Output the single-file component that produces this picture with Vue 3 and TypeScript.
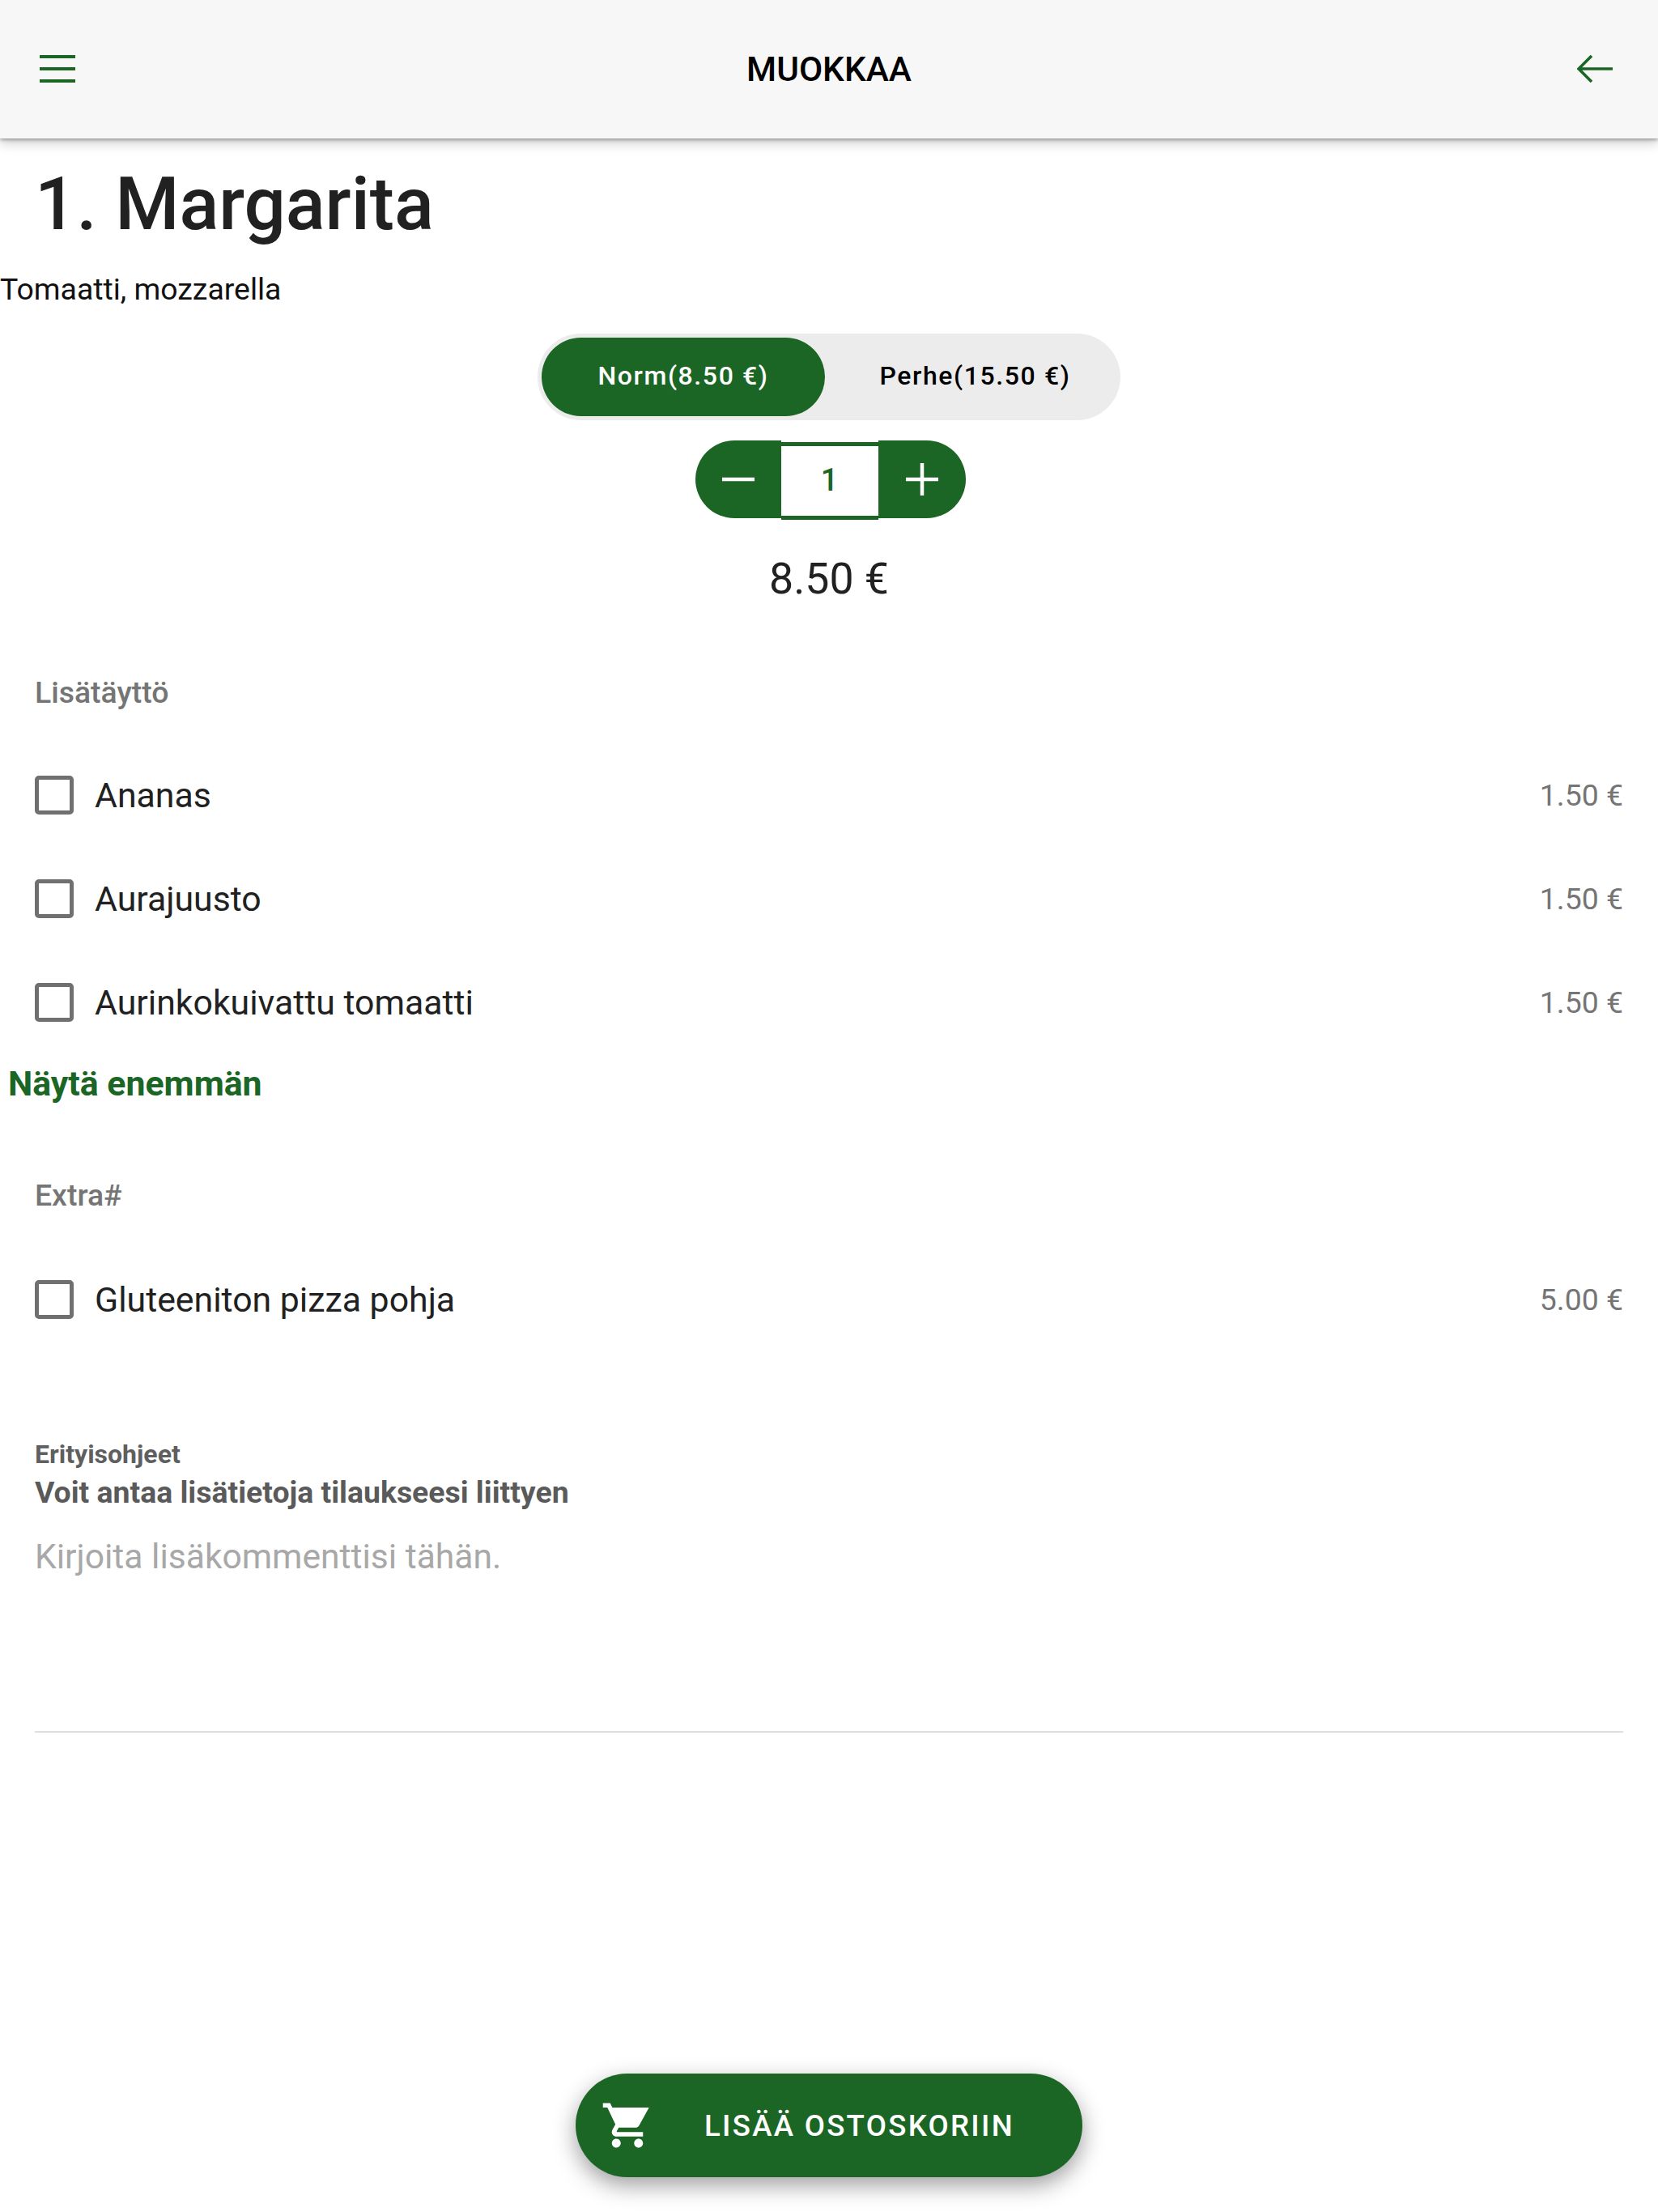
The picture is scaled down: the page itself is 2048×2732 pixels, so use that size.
<script setup lang="ts">
interface Topping { name: string; price: string }
const toppings: Topping[] = [
  { name: 'Ananas', price: '1.50 €' },
  { name: 'Aurajuusto', price: '1.50 €' },
  { name: 'Aurinkokuivattu tomaatti', price: '1.50 €' },
]
const extras: Topping[] = [{ name: 'Gluteeniton pizza pohja', price: '5.00 €' }]
</script>

<template>
  <div class="page">
    <header class="bar">
      <svg class="bar-icon" viewBox="0 0 44 34" fill="none" stroke="#1b6625" stroke-width="4">
        <path d="M0 2h44M0 17h44M0 32h44" />
      </svg>
      <div class="bar-title">MUOKKAA</div>
      <svg class="bar-icon" viewBox="0 0 44 34" fill="none" stroke="#1b6625" stroke-width="3.6">
        <path d="M44 17H2M18 1 2 17l16 16" />
      </svg>
    </header>

    <h1 class="name">1. Margarita</h1>
    <p class="desc">Tomaatti, mozzarella</p>

    <div class="segment">
      <div class="seg on">Norm(8.50 €)</div>
      <div class="seg off">Perhe(15.50 €)</div>
    </div>

    <div class="stepper">
      <div class="step left">
        <svg viewBox="0 0 40 40" width="40" height="40" fill="none" stroke="#fff" stroke-width="4.5" stroke-linecap="round"><path d="M0 20h40" /></svg>
      </div>
      <div class="qty">1</div>
      <div class="step right">
        <svg viewBox="0 0 40 40" width="40" height="40" fill="none" stroke="#fff" stroke-width="4.5" stroke-linecap="round"><path d="M0 20h40M20 0v40" /></svg>
      </div>
    </div>

    <div class="total">8.50 €</div>

    <div class="sec-title first">Lisätäyttö</div>
    <div v-for="t in toppings" :key="t.name" class="row">
      <span class="box"></span>
      <span class="label">{{ t.name }}</span>
      <span class="price">{{ t.price }}</span>
    </div>
    <div class="more">Näytä enemmän</div>

    <div class="sec-title second">Extra#</div>
    <div v-for="t in extras" :key="t.name" class="row">
      <span class="box"></span>
      <span class="label">{{ t.name }}</span>
      <span class="price">{{ t.price }}</span>
    </div>

    <section class="notes">
      <div class="notes-small">Erityisohjeet</div>
      <div class="notes-big">Voit antaa lisätietoja tilaukseesi liittyen</div>
      <div class="notes-input">Kirjoita lisäkommenttisi tähän.</div>
    </section>

    <div class="foot">
      <button class="cta">
        <svg class="cart" viewBox="0 0 24 24" fill="#fff">
          <path d="M7 18c-1.1 0-1.99.9-1.99 2S5.9 22 7 22s2-.9 2-2-.9-2-2-2zM1 2v2h2l3.6 7.59-1.35 2.45c-.16.28-.25.61-.25.96 0 1.1.9 2 2 2h12v-2H7.42c-.14 0-.25-.11-.25-.25l.03-.12.9-1.63h7.45c.75 0 1.41-.41 1.75-1.03L21.7 4H5.21l-.94-2H1zm16 16c-1.1 0-1.99.9-1.99 2s.89 2 1.99 2 2-.9 2-2-.9-2-2-2z" />
        </svg>
        <span>LISÄÄ OSTOSKORIIN</span>
      </button>
    </div>
  </div>
</template>

<style scoped>
.page {
  width: 2048px;
  height: 2732px;
  display: flex;
  flex-direction: column;
  background: #fff;
  font-family: Roboto, "Liberation Sans", sans-serif;
  color: #212121;
  overflow: hidden;
}
.bar {
  height: 171px;
  flex: none;
  background: #f7f7f7;
  box-shadow: 0 2px 4px rgba(0, 0, 0, 0.3), 0 6px 14px rgba(0, 0, 0, 0.18);
  display: flex;
  align-items: center;
  justify-content: space-between;
  padding: 0 56px 0 49px;
}
.bar-icon {
  width: 44px;
  height: 34px;
  margin-bottom: 2px;
}
.bar-title {
  font-size: 42.4px;
  font-weight: 500;
  color: #000;
  margin-left: 7px;
}
.name {
  margin: 27px 0 0 43px;
  height: 108px;
  line-height: 108px;
  font-size: 90.6px;
  font-weight: 500;
}
.desc {
  margin: 27px 0 0 0;
  height: 48px;
  line-height: 48px;
  font-size: 37.4px;
  color: #111;
}
.segment {
  align-self: center;
  margin-top: 31px;
  width: 720px;
  height: 107px;
  flex: none;
  border-radius: 54px;
  background: #ececec;
  display: flex;
  align-items: center;
  padding: 0 0 0 5px;
  box-sizing: border-box;
  font-size: 32px;
  font-weight: 500;
  letter-spacing: 1.6px;
}
.seg {
  height: 97px;
  line-height: 95px;
  text-align: center;
}
.seg.on {
  width: 350px;
  border-radius: 49px;
  background: #1b6625;
  color: #fff;
}
.seg.off {
  flex: 1;
  padding-left: 6px;
  color: #000;
}
.stepper {
  align-self: center;
  margin: 25px 0 0 3px;
  display: flex;
  width: 334px;
  height: 98px;
  flex: none;
}
.step {
  height: 96px;
  background: #1b6625;
  display: flex;
  align-items: center;
  justify-content: center;
  flex: none;
}
.step.left {
  width: 106px;
  border-radius: 48px 0 0 48px;
}
.step.right {
  width: 108px;
  border-radius: 0 48px 48px 0;
}
.qty {
  width: 120px;
  height: 96px;
  box-sizing: border-box;
  border-top: 5px solid #1b6625;
  border-bottom: 5px solid #1b6625;
  margin-top: 2px;
  text-align: center;
  line-height: 84px;
  font-size: 38px;
  font-weight: 500;
  color: #1b6625;
}
.total {
  align-self: center;
  margin-top: 43px;
  height: 60px;
  line-height: 60px;
  font-size: 53.6px;
  color: #212121;
}
.sec-title {
  margin-left: 43px;
  height: 44px;
  line-height: 44px;
  font-size: 37.4px;
  font-weight: 500;
  color: #757575;
}
.sec-title.first {
  margin-top: 88px;
  margin-bottom: 41px;
}
.sec-title.second {
  margin-top: 91px;
  margin-bottom: 43px;
}
.row {
  height: 128px;
  flex: none;
  display: flex;
  align-items: center;
  padding: 0 43px;
}
.box {
  width: 48px;
  height: 48px;
  box-sizing: border-box;
  border: 5px solid #707070;
  border-radius: 5px;
  flex: none;
}
.label {
  margin-left: 26px;
  font-size: 42.8px;
  color: #212121;
}
.price {
  margin-left: auto;
  font-size: 37.4px;
  color: #757575;
}
.more {
  margin-left: 10px;
  height: 50px;
  line-height: 50px;
  margin-top: 11px;
  font-size: 42.8px;
  font-weight: 700;
  color: #1b6625;
}
.notes {
  margin: 107px 43px 0 43px;
  height: 364px;
  box-sizing: border-box;
  border-bottom: 2px solid #dedede;
  flex: none;
}
.notes-small {
  height: 40px;
  line-height: 40px;
  font-size: 32px;
  font-weight: 700;
  color: #5f5f5f;
}
.notes-big {
  margin-top: 5px;
  height: 44px;
  line-height: 44px;
  font-size: 37.4px;
  font-weight: 700;
  color: #5a5a5a;
}
.notes-input {
  margin-top: 32px;
  height: 50px;
  line-height: 50px;
  font-size: 42.6px;
  color: #a8a8a8;
}
.foot {
  margin-top: auto;
  padding-bottom: 43px;
  display: flex;
  justify-content: center;
}
.cta {
  width: 626px;
  height: 128px;
  border: none;
  border-radius: 64px;
  background: #1b6625;
  color: #fff;
  font-family: inherit;
  font-size: 36.6px;
  font-weight: 500;
  letter-spacing: 2.3px;
  display: flex;
  align-items: center;
  padding: 0 0 0 31px;
  box-shadow: 0 10px 28px rgba(0, 0, 0, 0.38);
}
.cart {
  width: 66px;
  height: 66px;
  flex: none;
  margin-right: 62px;
}
</style>
